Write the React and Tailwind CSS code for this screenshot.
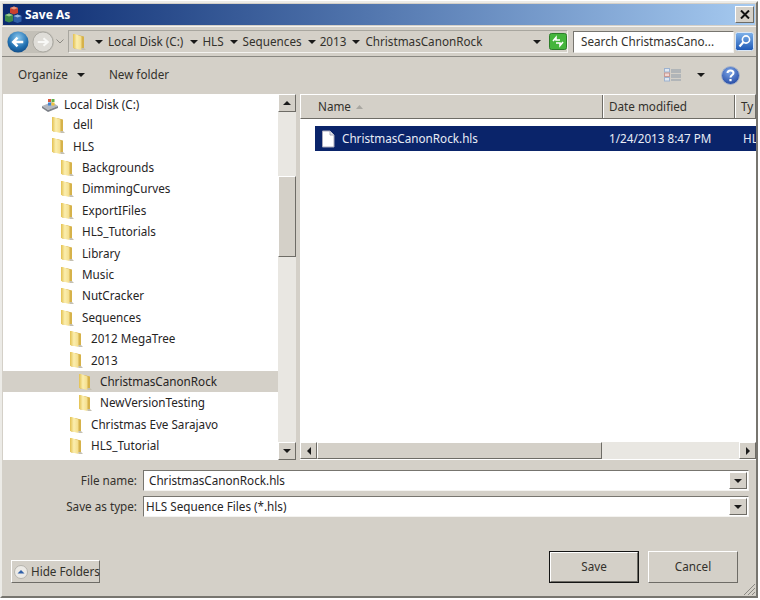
import React from 'react';

const raised = 'border border-t-white border-l-white border-r-[#6e6c66] border-b-[#6e6c66] bg-[#d4d0c8]';
const sunken = 'border border-t-[#77756f] border-l-[#77756f] border-r-[#f4f3f0] border-b-[#f4f3f0] bg-white';

const treeItems = [
  ['dell', 49, 73],
  ['HLS', 49, 73],
  ['Backgrounds', 58, 82],
  ['DimmingCurves', 58, 82],
  ['ExportIFiles', 58, 82],
  ['HLS_Tutorials', 58, 82],
  ['Library', 58, 82],
  ['Music', 58, 82],
  ['NutCracker', 58, 82],
  ['Sequences', 58, 82],
  ['2012 MegaTree', 67, 91],
  ['2013', 67, 91],
  ['ChristmasCanonRock', 76, 100, true],
  ['NewVersionTesting', 76, 100],
  ['Christmas Eve Sarajavo', 67, 91],
  ['HLS_Tutorial', 67, 91],
];

const Folder = ({ id = 'f' }) => (
  <svg width="16" height="18" viewBox="0 0 16 18" className="shrink-0">
    <defs>
      <linearGradient id={id} x1="0" x2="1" y1="0" y2="0">
        <stop offset="0" stopColor="#e3c050" />
        <stop offset="0.45" stopColor="#fbeeae" />
        <stop offset="1" stopColor="#f3dc8a" />
      </linearGradient>
    </defs>
    <path d="M4 2 H8 L14 3.5 V15.5 H4 Z" fill="#d6b24a" />
    <path d="M3 1 L5 1 L11.5 3.5 V17 L3 15 Z" fill={`url(#${id})`} />
    <path d="M11.5 17 L16 17 L14 15 H11.5 Z" fill="#c4c0b2" />
  </svg>
);

const Tri = ({ dir = 'down', size = 4 }) => {
  const pts = {
    down: `0,0 ${size * 2},0 ${size},${size}`,
    up: `0,${size} ${size * 2},${size} ${size},0`,
    left: `${size},0 ${size},${size * 2} 0,${size}`,
    right: `0,0 0,${size * 2} ${size},${size}`,
  }[dir];
  const horiz = dir === 'left' || dir === 'right';
  return (
    <svg width={horiz ? size : size * 2} height={horiz ? size * 2 : size} className="shrink-0">
      <polygon points={pts} fill="#1a1a1a" />
    </svg>
  );
};

const ScrollBtn = ({ dir, className = '' }) => (
  <div className={`${raised} flex items-center justify-center shrink-0 ${className}`}>
    <Tri dir={dir} />
  </div>
);

const Crumb = ({ label, ml }) => (
  <span className="text-[#33312c] whitespace-nowrap" style={{ marginLeft: ml }}>{label}</span>
);

const DialogField = ({ label, value, pad }) => (
  <div className="flex items-center h-[21px]">
    <div className="w-[135px] text-right text-[#33312c]">{label}</div>
    <div className={`${sunken} ml-[6px] w-[606px] h-full flex items-center justify-between pr-px`}>
      <span className="text-[#26241f]" style={{ paddingLeft: pad }}>{value}</span>
      <ScrollBtn dir="down" className="w-[18px] h-[17px]" />
    </div>
  </div>
);

export default function App() {
  return (
    <div className="w-[760px] h-[600px] bg-white overflow-hidden pt-[1px] font-['Noto_Sans',sans-serif] text-[11.7px] leading-none">
      <div className="w-[758px] h-[597px] bg-[#d4d0c8] border-2 border-t-[#ecebe7] border-l-[#ecebe7] border-r-[#77756f] border-b-[#77756f] flex flex-col">
        {/* title bar */}
        <div className="h-[21px] mx-px mt-px shrink-0 flex items-center justify-between bg-gradient-to-r from-[#0c2a70] to-[#a6caf0] pl-[1px] pr-[1px]">
          <div className="flex items-center gap-[3px]">
            <svg width="18" height="18" viewBox="0 0 18 18">
              <path d="M6 2 L10 0.5 L14 2 V7 L10 8.5 L6 7 Z" fill="#c8402f" />
              <path d="M6 2 L10 3.5 L14 2 L10 0.5 Z" fill="#e89a80" />
              <path d="M1 9 L5 7.5 L9 9 V15 L5 16.5 L1 15 Z" fill="#3e8a4a" />
              <path d="M1 9 L5 10.5 L9 9 L5 7.5 Z" fill="#9ccb8f" />
              <path d="M9.5 10 L13.5 8.5 L17.5 10 V15.5 L13.5 17 L9.5 15.5 Z" fill="#2f5fa8" />
              <path d="M9.5 10 L13.5 11.5 L17.5 10 L13.5 8.5 Z" fill="#94b4dc" />
            </svg>
            <span className="font-bold text-white text-[12px]">Save As</span>
          </div>
          <div className={`${raised} w-[19px] h-[17px] flex items-center justify-center`}>
            <svg width="10" height="9" viewBox="0 0 10 9">
              <path d="M1 0.5 L9 8.5 M9 0.5 L1 8.5" stroke="#111" strokeWidth="2" />
            </svg>
          </div>
        </div>

        {/* address bar */}
        <div className="h-[31px] shrink-0 mt-[1px] border-y border-t-[#f4f3f0] border-b-[#8a8882] flex items-center pl-[5px] pr-[1px]">
          <div className="w-[47px] h-[22px] shrink-0 flex items-center justify-between bg-[#c3c0b8] rounded-full">
            <svg width="22" height="22" viewBox="0 0 23 23" className="shrink-0">
              <defs>
                <radialGradient id="back" cx="0.5" cy="0.3" r="0.8">
                  <stop offset="0" stopColor="#8cc8ee" />
                  <stop offset="0.6" stopColor="#1f6fb0" />
                  <stop offset="1" stopColor="#0d3f78" />
                </radialGradient>
              </defs>
              <circle cx="11.5" cy="11.5" r="11" fill="url(#back)" />
              <path d="M17 11.5 H7 M11 7 L6.5 11.5 L11 16" stroke="#fff" strokeWidth="2.6" fill="none" />
            </svg>
            <svg width="22" height="22" viewBox="0 0 23 23" className="shrink-0">
              <circle cx="11.5" cy="11.5" r="10.5" fill="#dfddd8" stroke="#a9a7a1" />
              <path d="M6 11.5 H16 M12 7.5 L16.5 11.5 L12 15.5" stroke="#f8f8f6" strokeWidth="2.2" fill="none" />
            </svg>
          </div>
          <svg width="8" height="5" viewBox="0 0 8 5" className="ml-[2px] shrink-0">
            <path d="M0.5 0.5 L4 4 L7.5 0.5" stroke="#8b8983" fill="none" />
          </svg>
          <div className="ml-[4px] w-[500px] h-[23px] shrink-0 border border-t-[#a8a69f] border-l-[#a8a69f] border-r-[#f4f3f0] border-b-[#f4f3f0] flex items-center pl-[1px]">
            <Folder id="crumb" />
            <span className="ml-[9px]"><Tri /></span>
            <Crumb label="Local Disk (C:)" ml={5} />
            <span className="ml-[7px]"><Tri /></span>
            <Crumb label="HLS" ml={4} />
            <span className="ml-[6px]"><Tri /></span>
            <Crumb label="Sequences" ml={5} />
            <span className="ml-[6px]"><Tri /></span>
            <Crumb label="2013" ml={4} />
            <span className="ml-[6px]"><Tri /></span>
            <Crumb label="ChristmasCanonRock" ml={5} />
            <span className="ml-auto mr-[26px]"><Tri /></span>
          </div>
          <svg width="18" height="17" viewBox="0 0 18 17" className="shrink-0 ml-[-19px]">
            <rect x="0.5" y="0.5" width="17" height="16" rx="2" fill="#45b53c" stroke="#2d7d2a" />
            <path d="M4 8 L7 4.5 L7 7 L11 7 M14 9 L11 12.5 L11 10 L7 10" stroke="#fff" strokeWidth="1.6" fill="none" />
          </svg>
          <div className="ml-[6px] w-[161px] h-[22px] shrink-0 border border-t-[#77756f] border-l-[#77756f] border-r-[#f4f3f0] border-b-[#f4f3f0] bg-white flex items-center pl-[7px] text-[#33312c] whitespace-nowrap overflow-hidden">
            Search ChristmasCano...
          </div>
          <svg width="19" height="19" viewBox="0 0 19 19" className="shrink-0 ml-[1px]">
            <defs>
              <linearGradient id="srch" x1="0" x2="0" y1="0" y2="1">
                <stop offset="0" stopColor="#7fb2ea" />
                <stop offset="1" stopColor="#1c57b5" />
              </linearGradient>
            </defs>
            <rect x="0.5" y="0.5" width="18" height="18" rx="2" fill="url(#srch)" stroke="#d8e6f6" />
            <circle cx="11" cy="7.5" r="3.6" stroke="#fff" strokeWidth="1.6" fill="none" />
            <path d="M8.5 10 L4.5 14.5" stroke="#fff" strokeWidth="2.2" />
          </svg>
        </div>

        {/* toolbar */}
        <div className="h-[37px] shrink-0 flex items-center pl-[16px] pb-[1px] text-[#33312c]">
          <span>Organize</span>
          <span className="ml-[9px]"><Tri /></span>
          <span className="ml-[24px]">New folder</span>
          <svg width="18" height="14" viewBox="0 0 18 14" className="ml-auto shrink-0">
            <rect x="0.5" y="0.5" width="5" height="3.5" fill="#dfe7f2" stroke="#9db2cf" />
            <rect x="0.5" y="5" width="5" height="3.5" fill="#f3d5d0" stroke="#c79a94" />
            <rect x="0.5" y="9.5" width="5" height="3.5" fill="#dfe7f2" stroke="#9db2cf" />
            <path d="M7 2h10M7 4h10M7 7h10M7 9h10M7 12h10" stroke="#8d9aa8" />
          </svg>
          <span className="ml-[15px]"><Tri /></span>
          <svg width="19" height="19" viewBox="0 0 19 19" className="ml-[16px] mr-[16px] shrink-0">
            <defs>
              <radialGradient id="help" cx="0.45" cy="0.3" r="0.8">
                <stop offset="0" stopColor="#7da6e8" />
                <stop offset="1" stopColor="#1a3f9c" />
              </radialGradient>
            </defs>
            <circle cx="9.5" cy="9.5" r="9" fill="url(#help)" stroke="#a9b4c8" />
            <path d="M6.5 7 C6.5 3.5 12.5 3.5 12.5 7 C12.5 9 9.5 9 9.5 11.5" stroke="#fff" strokeWidth="2" fill="none" />
            <rect x="8.4" y="13" width="2.2" height="2.2" fill="#fff" />
          </svg>
        </div>

        {/* tree + list */}
        <div className="h-[366px] shrink-0 flex pl-px">
          <div className="w-[275px] bg-white overflow-hidden shrink-0">
            <div className="h-[21.4px] mt-[-1px] pt-[2px] flex items-center pl-[38px] text-[#26241f]">
              <svg width="18" height="14" viewBox="0 0 18 14" className="shrink-0">
                <path d="M1 8 L11 4 L17 8 L7 12 Z" fill="#b3b7bf" />
                <path d="M1 8 L7 12 L17 8 L17 10 L7 14 L1 10 Z" fill="#7c8088" />
                <rect x="7" y="1" width="3" height="3" fill="#d9563c" />
                <rect x="10.5" y="1" width="3" height="3" fill="#5fae46" />
                <rect x="7" y="4.5" width="3" height="3" fill="#3f83d3" />
                <rect x="10.5" y="4.5" width="3" height="3" fill="#eec33a" />
              </svg>
              <span className="ml-[5px]">Local Disk (C:)</span>
            </div>
            {treeItems.map(([name, icon, text, selected], i) => (
              <div
                key={name + i}
                className={`h-[21.4px] flex items-center text-[#26241f] ${selected ? 'bg-[#d4d0c8]' : ''}`}
                style={{ paddingLeft: icon - 3 }}
              >
                <Folder id={`tree${i}`} />
                <span className="whitespace-nowrap" style={{ marginLeft: text - icon - 16 }}>{name}</span>
              </div>
            ))}
          </div>
          <div className="w-[18px] shrink-0 flex flex-col bg-[#e9e7e2]">
            <ScrollBtn dir="up" className="h-[18px]" />
            <div className={`${raised} h-[81px] mt-[64px]`} />
            <div className="flex-1" />
            <ScrollBtn dir="down" className="h-[18px]" />
          </div>
          <div className="ml-[4px] flex-1 min-w-0 flex flex-col bg-white">
            <div className={`${raised} h-[25px] shrink-0 flex text-[#33312c] overflow-hidden`}>
              <div className="w-[302px] shrink-0 border-r border-r-[#6e6c66] flex items-center pl-[17px]">
                Name
                <svg width="7" height="4" viewBox="0 0 7 4" className="ml-[5px]"><polygon points="0,4 7,4 3.5,0" fill="#a9a7a1" /></svg>
              </div>
              <div className="w-[132px] shrink-0 border-r border-r-[#6e6c66] border-l border-l-white flex items-center pl-[5px]">Date modified</div>
              <div className="flex-1 flex items-center pl-[5px] border-l border-l-white">Ty</div>
            </div>
            <div className="flex-1 pt-[7px] pl-[15px] min-h-0">
              <div className="h-[25px] bg-[#0a246a] flex items-center text-[#e8ecf6] whitespace-nowrap overflow-hidden">
                <svg width="14" height="18" viewBox="0 0 14 18" className="ml-[6px] shrink-0">
                  <path d="M1.5 1 H9 L13 5 V17 H1.5 Z" fill="#fff" stroke="#aab" />
                  <path d="M9 1 V5 H13" fill="#dfe3ea" stroke="#aab" />
                </svg>
                <span className="ml-[7px] w-[267px] shrink-0">ChristmasCanonRock.hls</span>
                <span className="w-[134px] shrink-0">1/24/2013 8:47 PM</span>
                <span>HL</span>
              </div>
            </div>
            <div className="h-[17px] mb-[1px] shrink-0 flex bg-[#e9e7e2]">
              <ScrollBtn dir="left" className="w-[17px]" />
              <div className={`${raised} w-[285px]`} />
              <div className="flex-1" />
              <ScrollBtn dir="right" className="w-[17px]" />
            </div>
          </div>
        </div>

        {/* file name + type */}
        <div className="mt-[10px] shrink-0 flex flex-col gap-[5px] text-[#33312c]">
          <DialogField label="File name:" value="ChristmasCanonRock.hls" pad={5} />
          <DialogField label="Save as type:" value="HLS Sequence Files (*.hls)" pad={2} />
        </div>

        {/* bottom buttons */}
        <div className="flex-1 flex items-end pb-[13px] pl-[9px] pr-[18px] relative text-[#33312c]">
          <div className={`${raised} w-[89px] h-[23px] flex items-center pl-[2px]`}>
            <svg width="14" height="14" viewBox="0 0 14 14" className="shrink-0">
              <circle cx="7" cy="7" r="6.5" fill="#eceae6" stroke="#b5b3ad" />
              <polygon points="3.5,8.5 10.5,8.5 7,5" fill="#2f5fa8" />
            </svg>
            <span className="ml-[3px] whitespace-nowrap">Hide Folders</span>
          </div>
          <div className="ml-auto w-[90px] h-[32px] border border-[#141414] flex items-center justify-center">
            <div className="w-full h-full border border-t-white border-l-white border-r-[#6e6c66] border-b-[#6e6c66] flex items-center justify-center">Save</div>
          </div>
          <div className={`${raised} ml-[9px] w-[90px] h-[32px] flex items-center justify-center`}>Cancel</div>
          <svg width="14" height="14" viewBox="0 0 14 14" className="absolute right-0 bottom-0">
            <path d="M13 2 L2 13 M13 6 L6 13 M13 10 L10 13" stroke="#8a8882" fill="none" />
          </svg>
        </div>
      </div>
    </div>
  );
}
